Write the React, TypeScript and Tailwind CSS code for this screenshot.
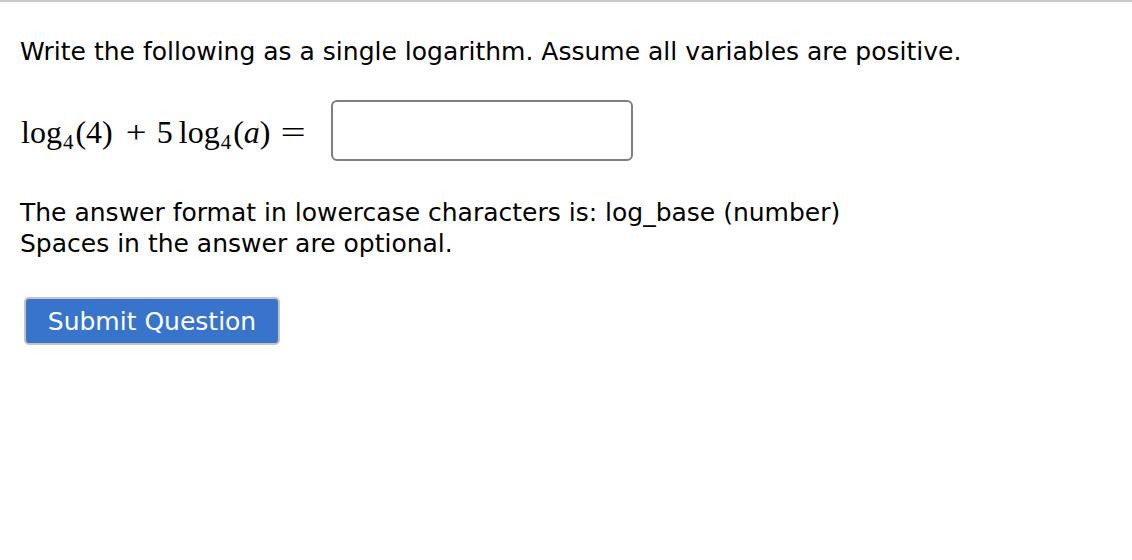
export default function App() {
  return (
    <div className="min-h-[560px] w-[1132px] bg-white border-t-2 border-[#c8c8c8] text-black" style={{ fontFamily: '"DejaVu Sans", Verdana, sans-serif' }}>
      <div className="pl-5 pt-[34px]">
        <p className="text-[25px] leading-[31px]">Write the following as a single logarithm. Assume all variables are positive.</p>

        {/* expression + answer box */}
        <div className="mt-[33px] flex items-center">
          <span className="text-[32px] whitespace-nowrap leading-none relative top-[1px]" style={{ fontFamily: '"Liberation Serif", "DejaVu Serif", serif' }}>
            <span className="ml-[1px]">log</span>
            <span className="text-[21px] relative top-[6px] ml-[1px]">4</span>
            <span className="ml-[2px]">(4)</span>
            <span className="inline-block ml-[14px] scale-x-[1.15]">+</span>
            <span className="ml-[12px]">5</span>
            <span className="ml-[6px]">log</span>
            <span className="text-[21px] relative top-[6px] ml-[1px]">4</span>
            <span className="ml-[2px]">(</span>
            <i>a</i>
            <span>)</span>
            <span className="inline-block ml-[14px] scale-x-[1.4]">=</span>
          </span>
          <input className="ml-[28px] w-[302px] h-[61px] border-2 border-[#7f7f7f] rounded-[6px] outline-none" />
        </div>

        <p className="mt-[36px] text-[25px] leading-[31px]">
          The answer format in lowercase characters is: log_base (number)
          <br />
          Spaces in the answer are optional.
        </p>

        <button className="mt-[38px] ml-1 w-[256px] h-[48px] bg-[#3874cb] border-2 border-[#c4c4c4] rounded-[5px] text-white text-[25px] leading-none">
          Submit Question
        </button>
      </div>
    </div>
  );
}
